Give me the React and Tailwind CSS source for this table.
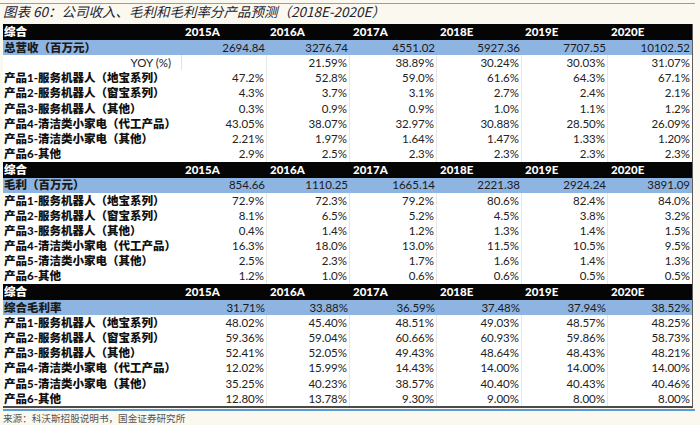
import React from "react";

const years = ["2015A", "2016A", "2017A", "2018E", "2019E", "2020E"];

const labels = [
  "产品1-服务机器人（地宝系列）",
  "产品2-服务机器人（窗宝系列）",
  "产品3-服务机器人（其他）",
  "产品4-清洁类小家电（代工产品）",
  "产品5-清洁类小家电（其他）",
  "产品6-其他",
];

const sections = [
  {
    total: ["总营收（百万元）", "2694.84", "3276.74", "4551.02", "5927.36", "7707.55", "10102.52"],
    yoy: ["", "21.59%", "38.89%", "30.24%", "30.03%", "31.07%"],
    rows: [
      ["47.2%", "52.8%", "59.0%", "61.6%", "64.3%", "67.1%"],
      ["4.3%", "3.7%", "3.1%", "2.7%", "2.4%", "2.1%"],
      ["0.3%", "0.9%", "0.9%", "1.0%", "1.1%", "1.2%"],
      ["43.05%", "38.07%", "32.97%", "30.88%", "28.50%", "26.09%"],
      ["2.21%", "1.97%", "1.64%", "1.47%", "1.33%", "1.20%"],
      ["2.9%", "2.5%", "2.3%", "2.3%", "2.3%", "2.3%"],
    ],
  },
  {
    total: ["毛利（百万元）", "854.66", "1110.25", "1665.14", "2221.38", "2924.24", "3891.09"],
    rows: [
      ["72.9%", "72.3%", "79.2%", "80.6%", "82.4%", "84.0%"],
      ["8.1%", "6.5%", "5.2%", "4.5%", "3.8%", "3.2%"],
      ["0.4%", "1.4%", "1.2%", "1.3%", "1.4%", "1.5%"],
      ["16.3%", "18.0%", "13.0%", "11.5%", "10.5%", "9.5%"],
      ["2.5%", "2.3%", "1.7%", "1.6%", "1.4%", "1.3%"],
      ["1.2%", "1.0%", "0.6%", "0.6%", "0.5%", "0.5%"],
    ],
  },
  {
    total: ["综合毛利率", "31.71%", "33.88%", "36.59%", "37.48%", "37.94%", "38.52%"],
    rows: [
      ["48.02%", "45.40%", "48.51%", "49.03%", "48.57%", "48.25%"],
      ["59.36%", "59.04%", "60.66%", "60.93%", "59.86%", "58.73%"],
      ["52.41%", "52.05%", "49.43%", "48.64%", "48.43%", "48.21%"],
      ["12.02%", "15.99%", "14.43%", "14.00%", "14.00%", "14.00%"],
      ["35.25%", "40.23%", "38.57%", "40.40%", "40.43%", "40.46%"],
      ["12.80%", "13.78%", "9.30%", "9.00%", "8.00%", "8.00%"],
    ],
  },
];

const grid = "grid grid-cols-[179px_85px_83px_87px_85px_86px_84px] items-center";
const font = { fontFamily: "Lato, 'Noto Sans CJK SC', sans-serif" };

function HeaderRow() {
  return (
    <div className={`${grid} h-[16px] bg-[#050505] text-white font-black text-[11.5px] leading-none`}>
      <div className="pl-[1px]">综合</div>
      {years.map((y) => (
        <div key={y} className="pl-[3px]">{y}</div>
      ))}
    </div>
  );
}

function TotalRow({ cells }) {
  return (
    <div className={`${grid} h-[15.2px] bg-[#8eb4e2] text-[#1b1b1b] text-[11.5px] leading-none`}>
      <div className="pl-[1px] font-black">{cells[0]}</div>
      {cells.slice(1).map((v, i) => (
        <div key={i} className="text-right pr-[2px]">{v}</div>
      ))}
    </div>
  );
}

function DataRow({ label, values, labelRight }) {
  return (
    <div className={`${grid} h-[15.2px] bg-white text-[#222] text-[11.5px] leading-none`}>
      <div
        className={
          labelRight
            ? "text-right pr-[10px] h-full flex items-center justify-end border-r border-[#e2e2e2]"
            : "pl-[1px] font-black text-[#111]"
        }
      >
        {label}
      </div>
      {values.map((v, i) => (
        <div
          key={i}
          className={`text-right pr-[2px] h-full flex items-center justify-end ${i < 5 ? "border-r border-[#e6e6e6]" : ""}`}
        >
          {v}
        </div>
      ))}
    </div>
  );
}

export default function App() {
  return (
    <div className="w-[700px] h-[425px] bg-[#fbf8ef] overflow-hidden" style={font}>
      {/* 标题 */}
      <div className="h-[24px] px-[3px] relative">
        <div className="absolute left-0 right-[5px] top-[3px] h-px bg-[#6aa8d8]" />
        <div
          className="pt-[3px] text-[13.5px] italic text-[#1d2330] leading-[17px] whitespace-nowrap"
          style={{ fontFamily: "'Noto Sans CJK SC', sans-serif" }}
        >
          图表 60：公司收入、毛利和毛利率分产品预测（2018E-2020E）
        </div>
      </div>

      {/* 表格 */}
      <div className="ml-[3px] w-[690px] border-r border-[#5c5c5c] border-b-2 border-b-[#4a4a4a]">
        {sections.map((s, si) => (
          <div key={si}>
            <HeaderRow />
            <TotalRow cells={s.total} />
            {s.yoy && <DataRow label="YOY (%)" values={s.yoy} labelRight />}
            {s.rows.map((r, ri) => (
              <DataRow key={ri} label={labels[ri]} values={r} />
            ))}
          </div>
        ))}
      </div>
      <div className="ml-[3px] mt-[1px] w-[692px] h-[2px] bg-[#5b9bd5]" />

      {/* 来源 */}
      <div
        className="pl-[3px] pt-[1px] text-[9.6px] text-[#555] leading-[12px]"
        style={{ fontFamily: "'Noto Sans CJK SC', sans-serif" }}
      >
        来源：科沃斯招股说明书，国金证券研究所
      </div>
    </div>
  );
}
